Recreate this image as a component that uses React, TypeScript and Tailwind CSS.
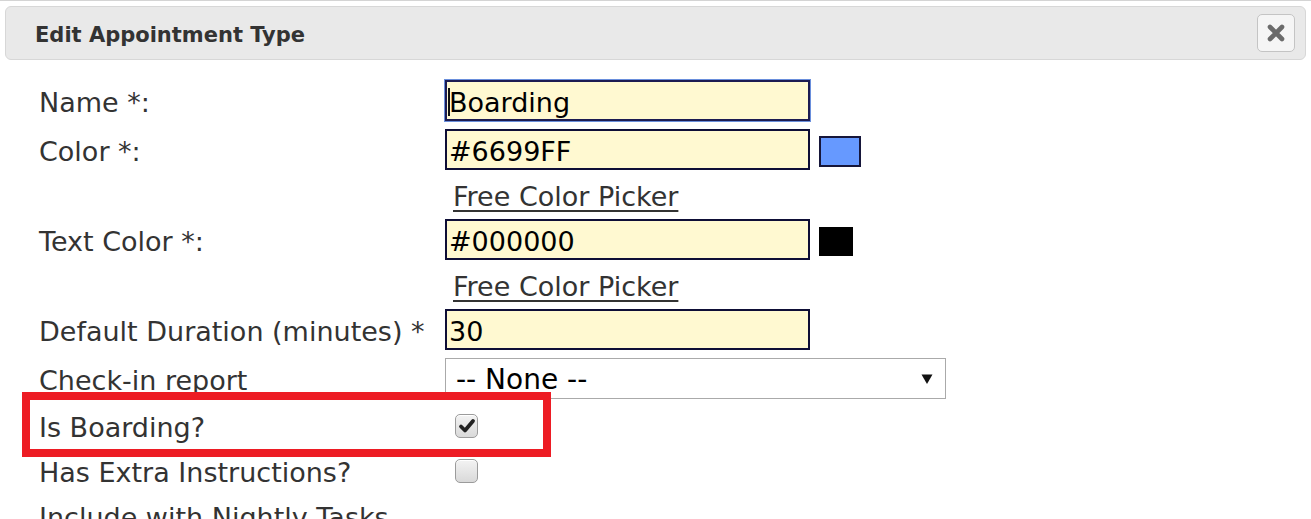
import React from "react";

function Checkbox({ checked }: { checked?: boolean }) {
  return (
    <div className="ml-[10px] flex h-[24px] w-[23px] items-center justify-center rounded-[5px] border border-[#9b9b9b] bg-gradient-to-b from-[#f3f3f3] to-[#d9d9d9] shadow-[inset_0_1px_0_#ffffff]">
      {checked && (
        <svg width="18" height="18" viewBox="0 0 18 18">
          <path d="M3 9.5 L7 13.5 L15 4" fill="none" stroke="#222" strokeWidth="3.8" strokeLinecap="round" strokeLinejoin="round" />
        </svg>
      )}
    </div>
  );
}

function TextInput({ value, focused }: { value: string; focused?: boolean }) {
  return (
    <div
      className={
        "relative flex h-[41px] w-[365px] items-center border-2 bg-[#fff9d1] pl-[2px] text-[27px] text-black " +
        (focused ? "border-[#1c1c52] shadow-[0_0_0_1px_#6a8fdc]" : "border-[#0e0e36]")
      }
    >
      {focused && <span className="absolute left-[1px] top-[6px] h-[28px] w-[2px] bg-[#111]" />}
      <span className="pt-[3px] leading-none">{value}</span>
    </div>
  );
}

function Row({ label, h, children }: { label: string; h: string; children?: React.ReactNode }) {
  return (
    <div className={"flex items-center " + h}>
      <div className="w-[406px] pt-[4px] text-[27px] leading-none text-[#333]">{label}</div>
      <div className="flex items-center">{children}</div>
    </div>
  );
}

function LinkRow() {
  return (
    <div className="flex h-[41px] items-center">
      <div className="w-[406px]" />
      <a className="pl-[8px] pt-[4px] text-[27px] leading-none text-[#333] underline underline-offset-[4px] decoration-[2px]">
        Free Color Picker
      </a>
    </div>
  );
}

export default function App() {
  return (
    <div className="relative h-[519px] w-[1311px] overflow-hidden border-t border-[#d4d4d4] bg-white font-['DejaVu_Sans',sans-serif]">
      <div className="mx-[5px] mt-[5px] flex h-[54px] items-center justify-between rounded-[6px] border border-[#d7d7d7] bg-[#e9e9e9] pl-[29px] pr-[10px]">
        <div className="pt-[4px] text-[21px] font-bold leading-none text-[#333]">Edit Appointment Type</div>
        <button className="flex h-[38px] w-[38px] items-center justify-center rounded-[5px] border border-[#c4c4c4] bg-[#f5f5f5]">
          <svg width="20" height="20" viewBox="0 0 20 20">
            <path d="M4 4 L16 16 M16 4 L4 16" stroke="#6b6b6b" strokeWidth="4.6" strokeLinecap="round" />
          </svg>
        </button>
      </div>

      <div className="pl-[39px] pt-[16px]">
        <Row label="Name *:" h="h-[49px]">
          <TextInput value="Boarding" focused />
        </Row>
        <Row label="Color *:" h="h-[49px]">
          <TextInput value="#6699FF" />
          <div className="ml-[9px] mt-[3px] h-[31px] w-[42px] border-2 border-[#16163a] bg-[#6699ff]" />
        </Row>
        <LinkRow />
        <Row label="Text Color *:" h="h-[49px]">
          <TextInput value="#000000" />
          <div className="ml-[9px] mt-[4px] h-[29px] w-[34px] bg-black" />
        </Row>
        <LinkRow />
        <Row label="Default Duration (minutes) *" h="h-[49px]">
          <TextInput value="30" />
        </Row>
        <Row label="Check-in report" h="h-[49px]">
          <div className="flex h-[41px] w-[501px] items-center justify-between border border-[#aaaaaa] bg-white pl-[10px] pr-[12px] text-[28px] text-black">
            <span className="pt-[3px] leading-none">-- None --</span>
            <svg width="12" height="12" viewBox="0 0 12 12">
              <path d="M0.5 1.5 H11.5 L6 11 Z" fill="#111" />
            </svg>
          </div>
        </Row>
        <Row label="Is Boarding?" h="h-[45px]">
          <Checkbox checked />
        </Row>
        <Row label="Has Extra Instructions?" h="h-[45px]">
          <Checkbox />
        </Row>
        <Row label="Include with Nightly Tasks" h="h-[45px]" />
      </div>

      <div className="pointer-events-none absolute left-[22px] top-[391px] h-[65px] w-[529px] border-[8px] border-[#ed1c24]" />
    </div>
  );
}
